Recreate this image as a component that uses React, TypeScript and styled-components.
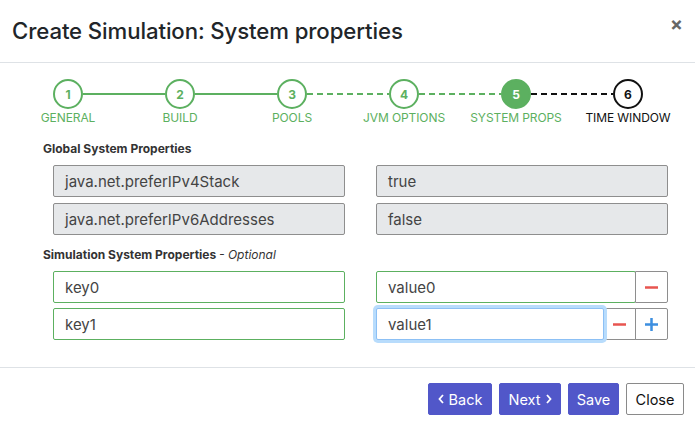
import React from "react";
import styled, { createGlobalStyle, css } from "styled-components";

const GREEN = "#5cb060";

const Global = createGlobalStyle`
  html, body { margin: 0; padding: 0; background: #fff; }
  body { font-family: Inter, "Liberation Sans", Arial, sans-serif; color: #212529; }
  * { box-sizing: border-box; }
`;

const Modal = styled.div`
  width: 695px;
  height: 425px;
  display: flex;
  flex-direction: column;
  background: #fff;
`;

const Header = styled.div`
  height: 63px;
  display: flex;
  align-items: center;
  justify-content: space-between;
  padding: 0 12px 2px 12px;
  border-bottom: 1px solid #dee2e6;
`;

const Title = styled.h2`
  margin: 0;
  font-size: 22.2px;
  font-weight: 500;
  letter-spacing: -0.1px;
  color: #212529;
`;

const CloseX = styled.span`
  font-size: 19px;
  font-weight: 700;
  color: #666;
  line-height: 1;
  margin-top: -12px;
`;

const Body = styled.div`
  flex: 1;
  padding: 16px 27px 0 0;
  display: flex;
  flex-direction: column;
`;

const StepTrack = styled.div`
  display: flex;
  align-items: center;
  padding-left: 53px;
  height: 30px;
`;

type Tone = "done" | "active" | "todo";

const Circle = styled.div<{ $tone: Tone }>`
  width: 30px;
  height: 30px;
  border-radius: 50%;
  display: flex;
  align-items: center;
  justify-content: center;
  font-size: 12px;
  font-weight: 700;
  flex: none;
  ${(p) =>
    p.$tone === "done" &&
    css`
      border: 2px solid ${GREEN};
      color: ${GREEN};
      background: #fff;
    `}
  ${(p) =>
    p.$tone === "active" &&
    css`
      border: 2px solid ${GREEN};
      color: #fff;
      background: ${GREEN};
    `}
  ${(p) =>
    p.$tone === "todo" &&
    css`
      border: 2px solid #111;
      color: #111;
      background: #fff;
    `}
`;

const Connector = styled.div<{ $color: string; $dashed: boolean }>`
  width: 82px;
  height: 2px;
  flex: none;
  background: ${(p) =>
    p.$dashed
      ? `repeating-linear-gradient(to right, ${p.$color} 0 6px, transparent 6px 10px)`
      : p.$color};
`;

const StepLabels = styled.div`
  display: grid;
  grid-template-columns: repeat(6, 112px);
  padding-left: 12px;
  margin-top: 1px;
`;

const StepLabel = styled.div<{ $tone: Tone }>`
  text-align: center;
  font-size: 12px;
  color: ${(p) => (p.$tone === "todo" ? "#111" : GREEN)};
  letter-spacing: -0.1px;
`;

const Section = styled.div`
  padding-left: 43px;
  display: flex;
  flex-direction: column;
`;

const SectionTitle = styled.div<{ $top: number }>`
  font-size: 12px;
  font-weight: 700;
  color: #333;
  margin-top: ${(p) => p.$top}px;
  margin-bottom: 9px;
  em {
    font-weight: 400;
    font-style: italic;
  }
`;

const Rows = styled.div<{ $gap: number }>`
  padding-left: 10px;
  display: flex;
  flex-direction: column;
  gap: ${(p) => p.$gap}px;
`;

const Row = styled.div`
  display: grid;
  grid-template-columns: 292px 292px;
  column-gap: 31px;
`;

const Field = styled.div<{ $variant: "readonly" | "valid" | "focus" }>`
  height: 32px;
  display: flex;
  align-items: center;
  padding-left: 11px;
  font-size: 15px;
  color: #444;
  border-radius: 2px;
  flex: 1;
  min-width: 0;
  ${(p) =>
    p.$variant === "readonly" &&
    css`
      background: #e6e8ea;
      border: 1px solid #8e8e8e;
    `}
  ${(p) =>
    p.$variant === "valid" &&
    css`
      background: #fff;
      border: 1px solid ${GREEN};
    `}
  ${(p) =>
    p.$variant === "focus" &&
    css`
      background: #fff;
      border: 1px solid #8cc0f5;
      box-shadow: 0 0 0 3px #b8dcfc;
      position: relative;
      z-index: 1;
    `}
`;

const Group = styled.div`
  display: flex;
`;

const IconBtn = styled.div`
  width: 33px;
  height: 32px;
  flex: none;
  display: flex;
  align-items: center;
  justify-content: center;
  border: 1px solid #8e8e8e;
  margin-left: -1px;
  background: #fff;
  &:last-child {
    border-radius: 0 2px 2px 0;
  }
`;

const Footer = styled.div`
  height: 58px;
  border-top: 1px solid #dee2e6;
  display: flex;
  justify-content: flex-end;
  align-items: flex-start;
  padding: 15px 11px 0 0;
  gap: 7px;
`;

const Btn = styled.button<{ $primary?: boolean; $w: number }>`
  height: 32px;
  width: ${(p) => p.$w}px;
  font-family: inherit;
  font-size: 14.5px;
  border-radius: 2px;
  display: flex;
  align-items: center;
  justify-content: center;
  gap: 5px;
  padding: 0;
  cursor: pointer;
  ${(p) =>
    p.$primary
      ? css`
          background: #5157c9;
          border: 1px solid #5157c9;
          color: #fff;
        `
      : css`
          background: #fff;
          border: 1px solid #8a8a8a;
          color: #111;
        `}
`;

const Minus = () => (
  <svg width="13" height="13" viewBox="0 0 13 13">
    <rect x="0" y="5.25" width="13" height="2.5" fill="#e85550" />
  </svg>
);

const Plus = () => (
  <svg width="13" height="13" viewBox="0 0 13 13">
    <rect x="0" y="5.25" width="13" height="2.5" fill="#3d8fe0" />
    <rect x="5.25" y="0" width="2.5" height="13" fill="#3d8fe0" />
  </svg>
);

const Chevron = ({ dir }: { dir: "left" | "right" }) => (
  <svg width="6" height="10" viewBox="0 0 6 10">
    <path
      d={dir === "left" ? "M5 1 L1.5 5 L5 9" : "M1 1 L4.5 5 L1 9"}
      fill="none"
      stroke="#fff"
      strokeWidth="1.8"
    />
  </svg>
);

const steps: { n: number; label: string; tone: Tone }[] = [
  { n: 1, label: "GENERAL", tone: "done" },
  { n: 2, label: "BUILD", tone: "done" },
  { n: 3, label: "POOLS", tone: "done" },
  { n: 4, label: "JVM OPTIONS", tone: "done" },
  { n: 5, label: "SYSTEM PROPS", tone: "active" },
  { n: 6, label: "TIME WINDOW", tone: "todo" },
];

const connectors = [
  { color: GREEN, dashed: false },
  { color: GREEN, dashed: false },
  { color: GREEN, dashed: true },
  { color: GREEN, dashed: true },
  { color: "#111", dashed: true },
];

export default function App() {
  return (
    <>
      <Global />
      <Modal>
        <Header>
          <Title>Create Simulation: System properties</Title>
          <CloseX>×</CloseX>
        </Header>
        <Body>
          <StepTrack>
            {steps.map((s, i) => (
              <React.Fragment key={s.n}>
                <Circle $tone={s.tone}>{s.n}</Circle>
                {i < connectors.length && (
                  <Connector $color={connectors[i].color} $dashed={connectors[i].dashed} />
                )}
              </React.Fragment>
            ))}
          </StepTrack>
          <StepLabels>
            {steps.map((s) => (
              <StepLabel key={s.n} $tone={s.tone}>
                {s.label}
              </StepLabel>
            ))}
          </StepLabels>
          <Section>
            <SectionTitle $top={16}>Global System Properties</SectionTitle>
            <Rows $gap={6}>
              <Row>
                <Field $variant="readonly">java.net.preferIPv4Stack</Field>
                <Field $variant="readonly">true</Field>
              </Row>
              <Row>
                <Field $variant="readonly">java.net.preferIPv6Addresses</Field>
                <Field $variant="readonly">false</Field>
              </Row>
            </Rows>
            <SectionTitle $top={12}>
              Simulation System Properties <em>- Optional</em>
            </SectionTitle>
            <Rows $gap={5}>
              <Row>
                <Field $variant="valid">key0</Field>
                <Group>
                  <Field $variant="valid">value0</Field>
                  <IconBtn>
                    <Minus />
                  </IconBtn>
                </Group>
              </Row>
              <Row>
                <Field $variant="valid">key1</Field>
                <Group>
                  <Field $variant="focus">value1</Field>
                  <IconBtn>
                    <Minus />
                  </IconBtn>
                  <IconBtn>
                    <Plus />
                  </IconBtn>
                </Group>
              </Row>
            </Rows>
          </Section>
        </Body>
        <Footer>
          <Btn $primary $w={64}>
            <Chevron dir="left" />
            Back
          </Btn>
          <Btn $primary $w={62}>
            Next
            <Chevron dir="right" />
          </Btn>
          <Btn $primary $w={51}>
            Save
          </Btn>
          <Btn $w={58}>Close</Btn>
        </Footer>
      </Modal>
    </>
  );
}
